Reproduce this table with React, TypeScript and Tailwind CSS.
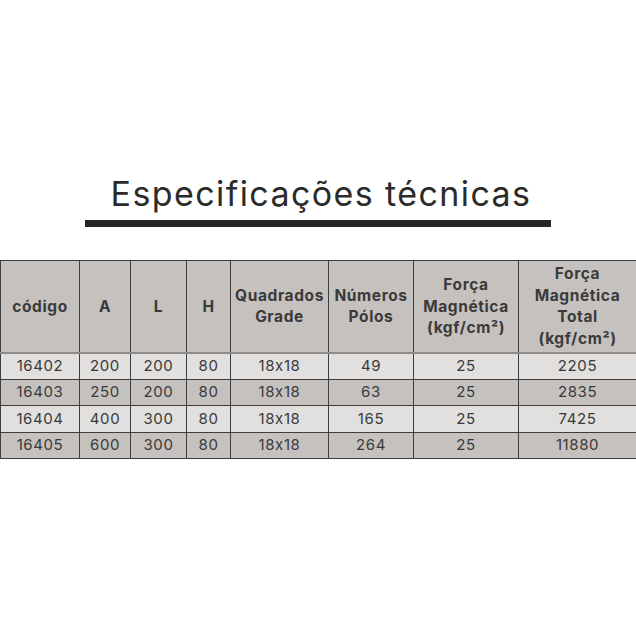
import React from "react";

const rows = [
  ["16402", "200", "200", "80", "18x18", "49", "25", "2205"],
  ["16403", "250", "200", "80", "18x18", "63", "25", "2835"],
  ["16404", "400", "300", "80", "18x18", "165", "25", "7425"],
  ["16405", "600", "300", "80", "18x18", "264", "25", "11880"],
];

const widths = [79, 51, 56, 44, 98, 85, 105, 118];

const headers: string[][] = [
  ["código"],
  ["A"],
  ["L"],
  ["H"],
  ["Quadrados", "Grade"],
  ["Números", "Pólos"],
  ["Força", "Magnética", "(kgf/cm²)"],
  ["Força", "Magnética", "Total", "(kgf/cm²)"],
];

export default function App() {
  return (
    <div
      className="w-[636px] h-[636px] bg-white flex flex-col [font-feature-settings:'calt'_0]"
      style={{ fontFamily: "Inter, 'Noto Sans', sans-serif" }}
    >
      <div className="pt-[174px] flex flex-col">
        <div className="text-center text-[34px] leading-[40px] text-[#2b2b2b] font-normal tracking-[1.4px] pl-[6px]">
          Especificações técnicas
        </div>
        <div className="ml-[85px] mt-[6px] w-[466px] h-[7px] bg-[#262626]" />
      </div>
      <table className="mt-[33px] w-[636px] border-collapse table-fixed text-[#3a3a3a]">
        <colgroup>
          {widths.map((w, i) => (
            <col key={i} style={{ width: w }} />
          ))}
        </colgroup>
        <thead>
          <tr className="h-[92px] bg-[#c5c1be]">
            {headers.map((h, i) => (
              <th
                key={i}
                className="border border-[#3d3d3d] border-b-2 border-b-[#8f8b88] text-[15.5px] leading-[21.5px] font-bold tracking-[0.6px] px-0 text-center whitespace-nowrap"
              >
                {h.map((line, li) => (
                  <div key={li}>{line}</div>
                ))}
              </th>
            ))}
          </tr>
        </thead>
        <tbody>
          {rows.map((r, ri) => (
            <tr
              key={ri}
              className={
                "h-[26.5px] " + (ri % 2 === 0 ? "bg-[#e1e0df]" : "bg-[#c5c1be]")
              }
            >
              {r.map((c, ci) => (
                <td
                  key={ci}
                  className="border border-[#3d3d3d] text-center text-[15px] leading-[18px] tracking-[0.6px] p-0 font-normal"
                >
                  {c}
                </td>
              ))}
            </tr>
          ))}
        </tbody>
      </table>
    </div>
  );
}
